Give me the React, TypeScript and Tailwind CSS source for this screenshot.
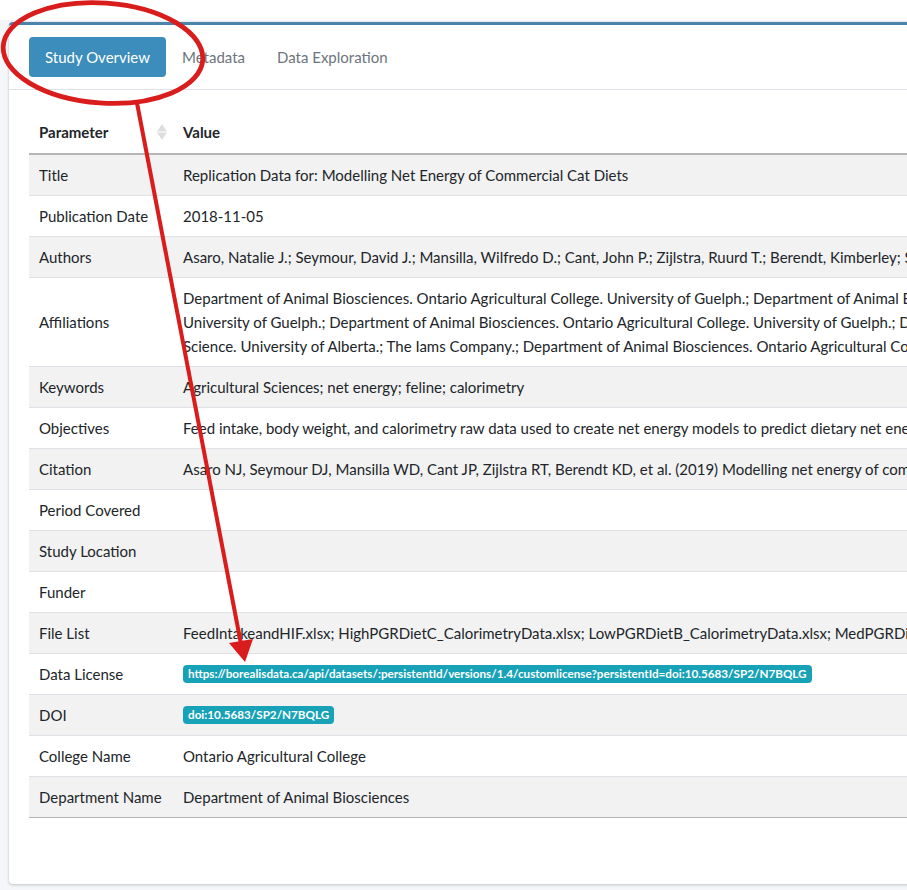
import React from "react";

type Row = { label: string; value: React.ReactNode };

const Badge = ({ children }: { children: React.ReactNode }) => (
  <span className="inline-block bg-[#17a2b8] text-white font-bold text-[11.7px] leading-none px-[5px] pt-[3px] pb-[3px] rounded-[4px] align-[2px]">
    {children}
  </span>
);

const rows: Row[] = [
  { label: "Title", value: "Replication Data for: Modelling Net Energy of Commercial Cat Diets" },
  { label: "Publication Date", value: "2018-11-05" },
  {
    label: "Authors",
    value:
      "Asaro, Natalie J.; Seymour, David J.; Mansilla, Wilfredo D.; Cant, John P.; Zijlstra, Ruurd T.; Berendt, Kimberley; Shoveller, Anna K.",
  },
  {
    label: "Affiliations",
    value: (
      <>
        Department of Animal Biosciences. Ontario Agricultural College. University of Guelph.; Department of Animal Biosciences. Ontario Agricultural College.
        <br />
        University of Guelph.; Department of Animal Biosciences. Ontario Agricultural College. University of Guelph.; Department of Agricultural, Food and Nutritional
        <br />
        Science. University of Alberta.; The Iams Company.; Department of Animal Biosciences. Ontario Agricultural College. University of Guelph.
      </>
    ),
  },
  { label: "Keywords", value: "Agricultural Sciences; net energy; feline; calorimetry" },
  {
    label: "Objectives",
    value:
      "Feed intake, body weight, and calorimetry raw data used to create net energy models to predict dietary net energy of commercial cat diets.",
  },
  {
    label: "Citation",
    value:
      "Asaro NJ, Seymour DJ, Mansilla WD, Cant JP, Zijlstra RT, Berendt KD, et al. (2019) Modelling net energy of commercial cat diets. PLoS ONE 14(6): e0218173.",
  },
  { label: "Period Covered", value: "" },
  { label: "Study Location", value: "" },
  { label: "Funder", value: "" },
  {
    label: "File List",
    value:
      "FeedIntakeandHIF.xlsx; HighPGRDietC_CalorimetryData.xlsx; LowPGRDietB_CalorimetryData.xlsx; MedPGRDietA_CalorimetryData.xlsx; README.txt",
  },
  {
    label: "Data License",
    value: (
      <Badge>
        https://borealisdata.ca/api/datasets/:persistentId/versions/1.4/customlicense?persistentId=doi:10.5683/SP2/N7BQLG
      </Badge>
    ),
  },
  { label: "DOI", value: <Badge>doi:10.5683/SP2/N7BQLG</Badge> },
  { label: "College Name", value: "Ontario Agricultural College" },
  { label: "Department Name", value: "Department of Animal Biosciences" },
];

const SortIcon = () => (
  <svg width="10" height="16" viewBox="0 0 10 16" className="inline-block">
    <polygon points="5,0 10,7.6 0,7.6" fill="#dedede" />
    <polygon points="0,8.4 10,8.4 5,16" fill="#dedede" />
  </svg>
);

export default function App() {
  return (
    <div className="relative w-[907px] h-[890px] overflow-hidden bg-[#f4f6f9] font-['Lato',sans-serif] text-[#212529]">
      <div className="h-[20px] bg-white" />
      <div className="pl-[9px] pt-[2px]">
        <div className="w-[1500px] bg-white rounded-[4px] border-t-[3px] border-[#4a83ab] shadow-[0_0_1px_rgba(0,0,0,0.13),0_1px_3px_rgba(0,0,0,0.2)]">
          <div className="flex items-center px-[20px] pt-[12px] pb-[12px] border-b border-[#dee2e6] text-[15px]">
            <div className="bg-[#3c8dbc] text-white rounded-[4px] px-[16px] h-[40px] flex items-center">
              Study Overview
            </div>
            <div className="text-[#6c757d] px-[16px] h-[40px] flex items-center">Metadata</div>
            <div className="text-[#6c757d] px-[16px] h-[40px] flex items-center">Data Exploration</div>
          </div>
          <div className="px-[20px] pt-[21px] pb-[66px]">
            <table className="w-full border-collapse text-[15px] leading-6">
              <thead>
                <tr className="border-b-2 border-[#b5b5b5]">
                  <th className="w-[144px] text-left font-bold px-[10px] py-[9px]">
                    <div className="flex items-center justify-between">
                      <span>Parameter</span>
                      <span className="mr-[-4px] flex items-center">
                        <SortIcon />
                      </span>
                    </div>
                  </th>
                  <th className="text-left font-bold px-[10px] py-[9px]">Value</th>
                </tr>
              </thead>
              <tbody>
                {rows.map((r, i) => (
                  <tr
                    key={r.label}
                    className={
                      (i % 2 === 0 ? "bg-[#f2f2f2] " : "bg-white ") +
                      (i === rows.length - 1 ? "border-b border-[#b5b5b5]" : "border-b border-[#dee2e6]")
                    }
                  >
                    <td className="px-[10px] py-[8px] align-middle whitespace-nowrap">{r.label}</td>
                    <td className="px-[10px] py-[8px] align-middle whitespace-nowrap">{r.value}</td>
                  </tr>
                ))}
              </tbody>
            </table>
          </div>
        </div>
      </div>
      <svg className="absolute inset-0 pointer-events-none" width="907" height="890" viewBox="0 0 907 890">
        <ellipse
          cx="103"
          cy="53"
          rx="100"
          ry="50"
          transform="rotate(4 103 53)"
          fill="none"
          stroke="#d91c1c"
          strokeWidth="4.8"
        />
        <line x1="137" y1="103" x2="241" y2="644" stroke="#d91c1c" strokeWidth="4" />
        <polygon points="245,662 229,643 253,639" fill="#d91c1c" />
      </svg>
    </div>
  );
}
